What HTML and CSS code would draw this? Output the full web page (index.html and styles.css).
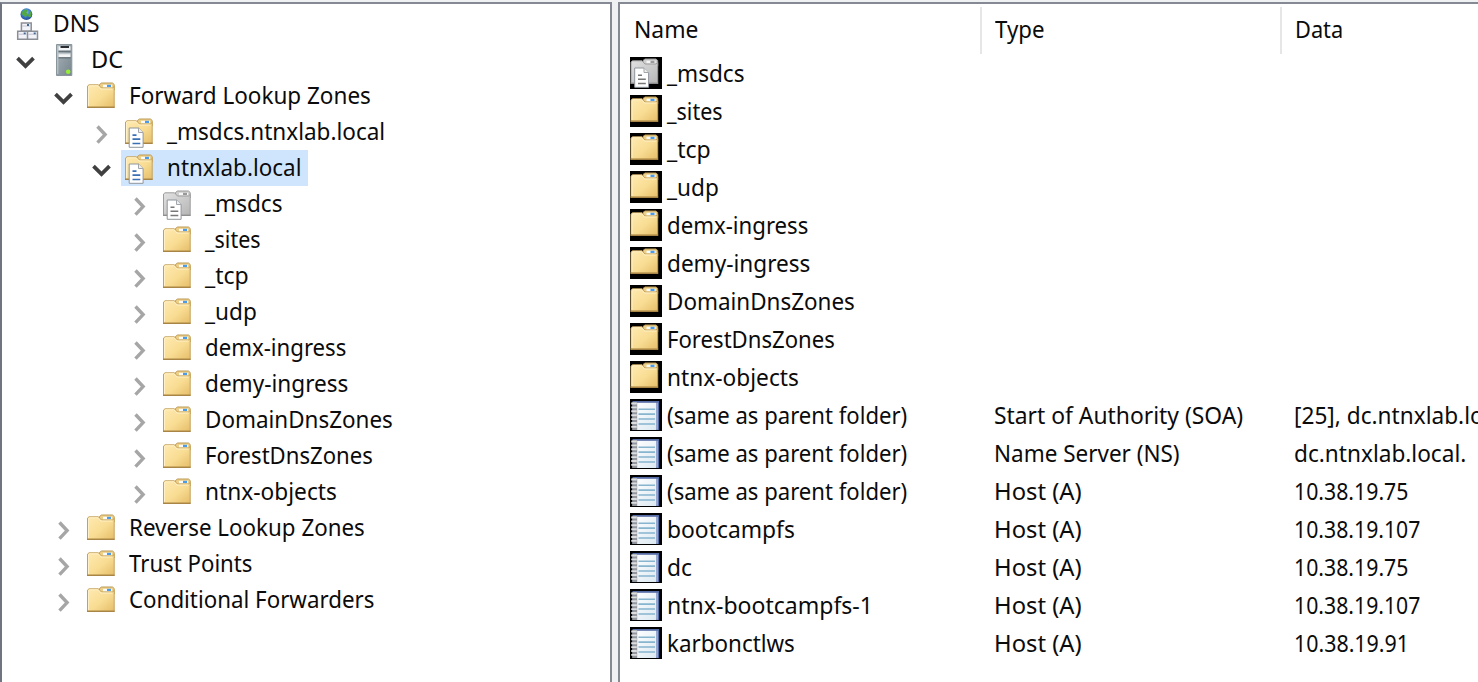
FILE: index.html
```html
<!DOCTYPE html>
<html lang="en">
<head>
<meta charset="utf-8">
<title>DNS Manager</title>
<link rel="stylesheet" href="styles.css">
</head>
<body>
<svg class="defs" aria-hidden="true">
  <defs>
    <linearGradient id="gold" x1="0" y1="0" x2="1" y2="1"><stop offset="0" stop-color="#ffeab2"/><stop offset=".55" stop-color="#f8dc92"/><stop offset="1" stop-color="#e5bd69"/></linearGradient>
    <linearGradient id="grey" x1="0" y1="0" x2="1" y2="1"><stop offset="0" stop-color="#e2e2e2"/><stop offset="1" stop-color="#b5b5b5"/></linearGradient>
    <linearGradient id="steel" x1="0" y1="0" x2="1" y2="1"><stop offset="0" stop-color="#a9b3b9"/><stop offset="1" stop-color="#77858d"/></linearGradient>
    <linearGradient id="page" x1="0" y1="0" x2="1" y2="1"><stop offset="0" stop-color="#fff"/><stop offset="1" stop-color="#dce9f2"/></linearGradient>
    <radialGradient id="globe" cx=".45" cy=".35" r=".65"><stop offset="0" stop-color="#8cc8f4"/><stop offset=".6" stop-color="#3474c4"/><stop offset="1" stop-color="#284b91"/></radialGradient>
  </defs>
  <symbol id="folder" viewBox="0 0 32 32">
    <path d="M14.5 7V4.5l2-1.5h11l1.7 1.5V10h-13z" fill="#edcf87" stroke="#bd9a55"/>
    <path d="M18 4.8h9v2.7h-9z" fill="#f8fbfd"/><path d="M22 4.8h4v2.2h-4z" fill="#4b9be8"/>
    <path d="M2.5 27.3V6l1.5-1.2h9.5L16.5 8h11l1.7-1.5v20.8z" fill="url(#gold)" stroke="#c5a25c"/>
    <path d="M3.5 26V6.6l1-.8h8.5l3 3.2h11.5" fill="none" stroke="#fff1c5"/>
    <path d="M2 27.3h27.7" stroke="#a98545" stroke-width="1.4"/>
  </symbol>
  <symbol id="sheet" viewBox="0 0 32 32">
    <path d="M6.2 12h9.3l4.6 4.5v14.8H6.2z" fill="#fff" stroke="#8f969c"/>
    <path d="M15.5 12v4.5h4.6" fill="#eee" stroke="#a2a6aa"/>
  </symbol>
  <symbol id="zone" viewBox="0 0 32 32">
    <use href="#folder"/><use href="#sheet"/>
    <path d="M9.5 19.2h4M9.5 23.2h7.8M9.5 27.5h7.8" stroke="#3c70b4" stroke-width="1.7"/>
  </symbol>
  <symbol id="deleg" viewBox="0 0 32 32">
    <path d="M14.5 7V4.5l2-1.5h11l1.7 1.5V10h-13z" fill="#cfcfcf" stroke="#999"/>
    <path d="M18 4.8h9v2.7h-9z" fill="#f6f6f6"/><path d="M22 4.8h4v2.2h-4z" fill="#999"/>
    <path d="M2.5 27.3V6l1.5-1.2h9.5L16.5 8h11l1.7-1.5v20.8z" fill="url(#grey)" stroke="#9d9d9d"/>
    <path d="M2 27.3h27.7" stroke="#8c8c8c" stroke-width="1.2"/>
    <use href="#sheet"/>
    <path d="M9.5 19.2h4M9.5 23.2h7.8M9.5 27.5h7.8" stroke="#777" stroke-width="1.6"/>
  </symbol>
  <symbol id="server" viewBox="0 0 32 32">
    <path d="M9.5.5h15.3v31H9.5z" fill="url(#steel)" stroke="#8a959c"/>
    <path d="M10.8 1.5V30" stroke="#c4ccd1"/>
    <path d="M11.5 2.2h12v4.3h-12zM11.5 9h12v4h-12z" fill="#f2f4f5"/>
    <path d="M13.5 3h8.5" stroke="#15191d" stroke-width="1.8"/>
    <path d="M11.5 7.4h12M11.5 13.8h12" stroke="#65727a" stroke-width="1.3"/>
    <path d="M11.5 9.7h12" stroke="#9aa4aa" stroke-width=".7"/>
    <circle cx="21.2" cy="27.8" r="2.3" fill="#94ee35"/>
  </symbol>
  <symbol id="dns" viewBox="0 0 32 32">
    <circle cx="17.4" cy="6.2" r="5.9" fill="url(#globe)"/>
    <path d="M13.5 2.9l3-2 2 1.5-1 2.2 1.2 2-2.2 3-2-2-1.8-1zM20 1.7l2.5 2.8-.4 4.3-2.3.5-1-2 1.8-2.3z" fill="#51a844"/>
    <g fill="#f1f3f8" stroke="#8c8e96" stroke-width="1.5"><path d="M12.4 15h9.8v8h-9.8zM8.7 23.2h9.8v8H8.7zM18.5 23.2h10v8h-10z"/></g>
    <path d="M13 18h8.5M9.4 26.2h8.4M19.2 26.2h8.6" stroke="#c1c5d2"/>
    <path d="M18 17h2M14.7 25.3h2M24.7 25.3h2" stroke="#416596" stroke-width="1.8"/>
  </symbol>
  <symbol id="record" viewBox="0 0 32 32">
    <path d="M0 0h32v32H0z" fill="#000"/>
    <path d="M2.5 2h26.7v29H2.5z" fill="#566ca6"/>
    <path d="M5 3.8h21v27.2H5z" fill="url(#page)"/>
    <path d="M27 3.8v27" stroke="#b9c6e2" stroke-width="1.3"/>
    <path d="M8.5 10.2h16.5M8.5 15.1h16.5M8.5 20h16.5M8.5 25h16.5" stroke="#87b4cf" stroke-width="1.6"/>
    <path d="M4.7 3v28" stroke="#93979d" stroke-width="5"/>
    <path d="M1.2 4.5h5.6M1.2 8.4h5.6M1.2 12.3h5.6M1.2 16.2h5.6M1.2 20.1h5.6M1.2 24h5.6M1.2 27.9h5.6" stroke="#dcdee0" stroke-width="1.9"/>
  </symbol>
  <symbol id="right" viewBox="0 0 38 36"><path d="M14.5 12.5l7.6 8.1-7.6 8.1" fill="none" stroke="#a6a6a6" stroke-width="3.4"/></symbol>
  <symbol id="down" viewBox="0 0 38 36"><path d="M10.5 16.2l8 7.8 8-7.8" fill="none" stroke="#404040" stroke-width="3.8"/></symbol>
</svg>

<main class="console">
  <nav class="pane tree" id="tree"></nav>
  <section class="pane list">
    <header class="grid head">
      <div class="cell"><span class="text" data-w="62">Name</span></div>
      <div class="cell"><span class="text" data-w="49">Type</span></div>
      <div class="cell"><span class="text" data-w="45">Data</span></div>
    </header>
    <div id="records"></div>
  </section>
</main>
<script src="app.js"></script>
</body>
</html>
```
FILE: styles.css
```css
* { box-sizing: border-box; }
body {
  margin: 0;
  height: 682px;
  overflow: hidden;
  background: #f0f1f3;
  color: #0b0b0b;
  font: 24px/34px "Noto Sans", "Open Sans", sans-serif;
}
.defs { position: absolute; width: 0; height: 0; }
.console {
  display: grid;
  grid-template-columns: 612px 860px;
  column-gap: 6px;
  padding-top: 2px;
  height: 682px;
}
.pane {
  background: #fff;
  border: 2px solid #858993;
  border-bottom: 0;
  height: 680px;
  overflow: hidden;
}
.tree { border-left-color: #6f7480; padding-top: 2px; }
.list { border-right: 0; }
.node { display: flex; height: 36px; padding-left: calc(var(--level) * 38px - 33px); }
.node.root { padding-left: 5px; }
.chevron { width: 38px; height: 36px; flex: none; }
.item { display: flex; align-items: center; gap: 11.5px; padding-left: 2px; height: 36px; }
.item.selected { width: 187px; background: #cfe5fd; }
.icon { width: 32px; height: 32px; flex: none; }
.text { display: inline-block; white-space: pre; transform-origin: 0 50%; padding-bottom: 2px; }
.grid { display: grid; grid-template-columns: 362px 300px 198px; }
.head { height: 51px; padding-top: 3px; }
.head .cell { height: 47px; padding: 5px 0 0 13px; border-right: 2px solid #e6e6e6; }
.head .cell:first-child { padding-left: 14px; }
.head .cell:last-child { border-right: 0; padding-left: 12.5px; }
.row { height: 38px; }
.row .cell { display: flex; align-items: center; height: 36px; padding-left: 12px; white-space: nowrap; }
.row .cell:first-child { padding-left: 10px; gap: 4.5px; }
.row .text { padding-bottom: 0; }
.row .icon.folder { background: #000; }
.row .icon.folder use { transform: translate(-1.5px, -1px); }
```
FILE: app.js
```js
const tree = [
  [0, '', 'dns', 'DNS', 44.5],
  [1, 'down', 'server', 'DC', 30],
  [2, 'down', 'folder', 'Forward Lookup Zones', 239.5],
  [3, 'right', 'zone', '_msdcs.ntnxlab.local', 218],
  [3, 'down', 'zone', 'ntnxlab.local', 131.5, true],
  [4, 'right', 'deleg', '_msdcs', 78],
  [4, 'right', 'folder', '_sites', 56],
  [4, 'right', 'folder', '_tcp', 44],
  [4, 'right', 'folder', '_udp', 52],
  [4, 'right', 'folder', 'demx-ingress', 140],
  [4, 'right', 'folder', 'demy-ingress', 142],
  [4, 'right', 'folder', 'DomainDnsZones', 185.5],
  [4, 'right', 'folder', 'ForestDnsZones', 165.5],
  [4, 'right', 'folder', 'ntnx-objects', 129.5],
  [2, 'right', 'folder', 'Reverse Lookup Zones', 233.5],
  [2, 'right', 'folder', 'Trust Points', 123],
  [2, 'right', 'folder', 'Conditional Forwarders', 244]
];
const same = ['(same as parent folder)', 240];
const host = ['Host (A)', 85.5];
const records = [
  ...tree.slice(5, 14).map(n => [n[2], [n[3], n[4]]]),
  ['record', same, ['Start of Authority (SOA)', 248], ['[25], dc.ntnxlab.local', 217]],
  ['record', same, ['Name Server (NS)', 183.5], ['dc.ntnxlab.local.', 170]],
  ['record', same, host, ['10.38.19.75', 112]],
  ['record', ['bootcampfs', 125.5], host, ['10.38.19.107', 124]],
  ['record', ['dc', 23.5], host, ['10.38.19.75', 112]],
  ['record', ['ntnx-bootcampfs-1', 199.5], host, ['10.38.19.107', 124]],
  ['record', ['karbonctlws', 125.5], host, ['10.38.19.91', 109]]
];
const svg = (id, cls) => `<svg class="${cls}"><use href="#${id}"/></svg>`;
const text = (t, w) => `<span class="text" data-w="${w}">${t}</span>`;

document.getElementById('tree').innerHTML = tree.map(([level, chevron, icon, t, w, selected]) =>
  `<div class="node${level ? '' : ' root'}" style="--level:${level}">${chevron ? svg(chevron, 'chevron') : ''}` +
  `<div class="item${selected ? ' selected' : ''}">${svg(icon, 'icon')}${text(t, w)}</div></div>`).join('');

document.getElementById('records').innerHTML = records.map(([icon, ...cells]) =>
  `<div class="grid row">${cells.map((c, i) =>
    `<div class="cell">${i ? '' : svg(icon, 'icon ' + (icon === 'record' ? '' : 'folder'))}${text(...c)}</div>`).join('')}</div>`).join('');

// Condense each label so its visible glyphs span the given width.
const ctx = document.createElement('canvas').getContext('2d');
document.querySelectorAll('.text').forEach(el => {
  ctx.font = '24px "Noto Sans"';
  const m = ctx.measureText(el.textContent);
  const ink = m.actualBoundingBoxRight + m.actualBoundingBoxLeft;
  el.style.transform = `scaleX(${el.dataset.w / ink})`;
});
```
